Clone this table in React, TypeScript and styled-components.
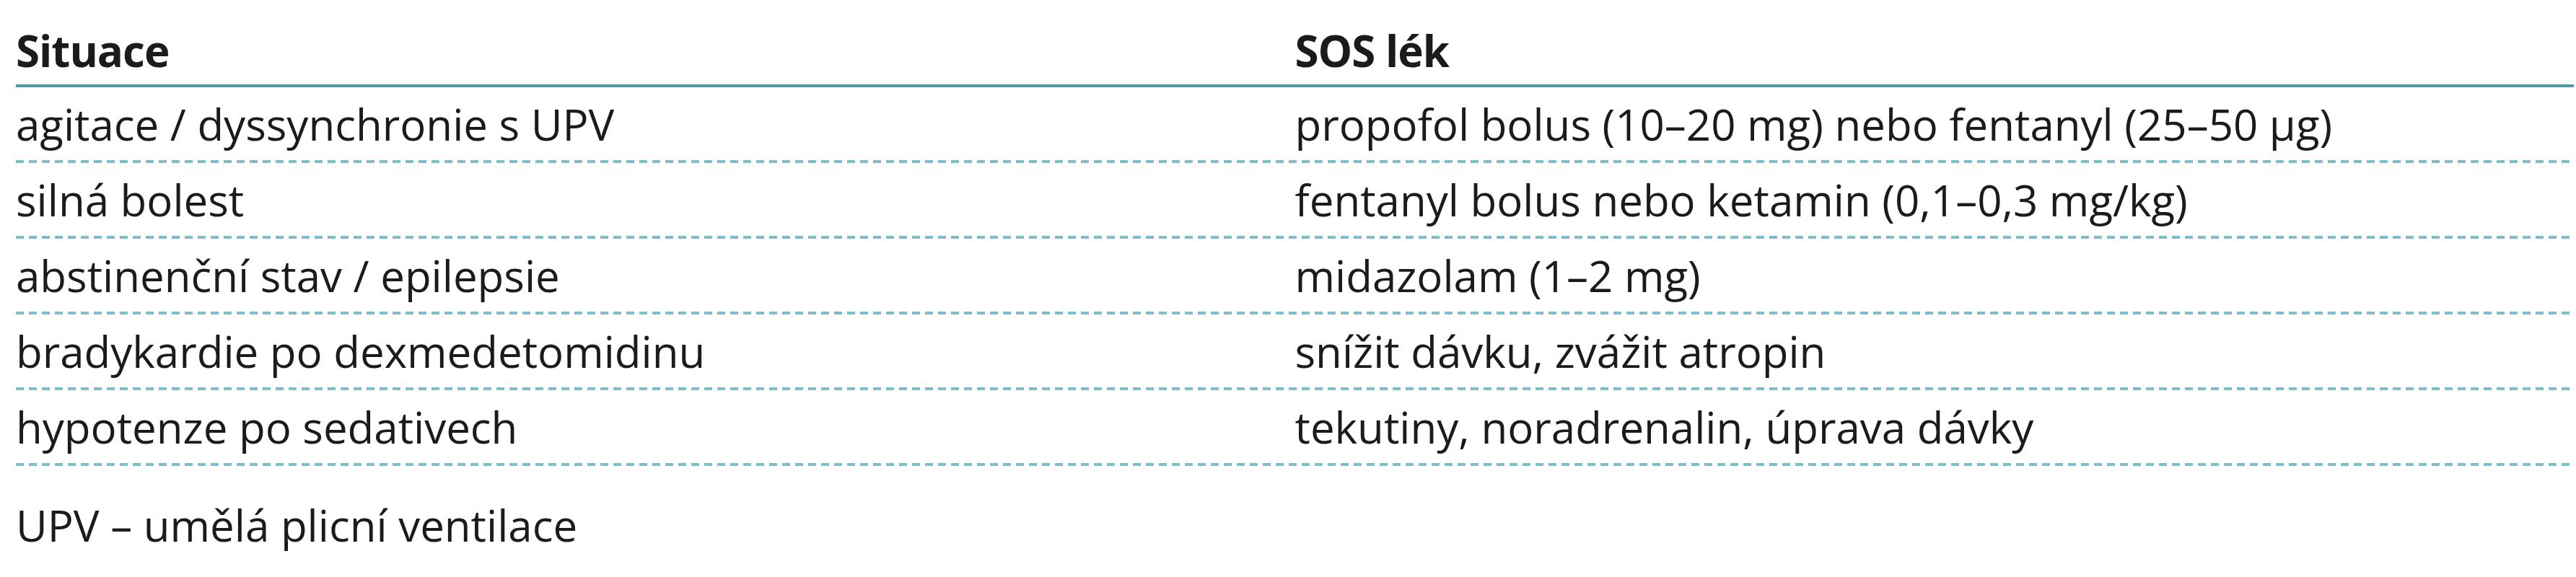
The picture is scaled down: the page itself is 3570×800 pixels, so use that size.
import React from "react";
import styled, { createGlobalStyle } from "styled-components";

const GlobalStyle = createGlobalStyle`
  html, body {
    margin: 0;
    padding: 0;
    background: #ffffff;
  }
  body {
    font-family: "Open Sans", "Noto Sans", sans-serif;
    color: #1e1a1b;
  }
`;

const Wrapper = styled.div`
  margin: 0 3px 0 22px;
  padding-top: 20px;
`;

const Table = styled.div`
  display: flex;
  flex-direction: column;
`;

const HeaderRow = styled.div`
  display: grid;
  grid-template-columns: 1fr 1fr;
  padding: 14px 0 11px;
  border-bottom: 4px solid #4a9aab;
`;

const Row = styled.div`
  display: grid;
  grid-template-columns: 1fr 1fr;
  padding: 15px 0 18px;
  background-image: repeating-linear-gradient(
    to right,
    #7cbdd0 0 11px,
    transparent 11px 18px
  );
  background-size: 100% 4px;
  background-position: left bottom;
  background-repeat: no-repeat;
`;

const Cell = styled.div<{ $head?: boolean }>`
  font-size: 60px;
  line-height: 72px;
  font-weight: ${(p) => (p.$head ? 700 : 500)};
  letter-spacing: ${(p) => (p.$head ? "-1px" : "0")};
  white-space: nowrap;
`;

const Footnote = styled.div`
  margin-top: 46px;
  font-size: 60px;
  line-height: 72px;
  font-weight: 500;
`;

const rows: [string, string][] = [
  ["agitace / dyssynchronie s UPV", "propofol bolus (10–20 mg) nebo fentanyl (25–50 µg)"],
  ["silná bolest", "fentanyl bolus nebo ketamin (0,1–0,3 mg/kg)"],
  ["abstinenční stav / epilepsie", "midazolam (1–2 mg)"],
  ["bradykardie po dexmedetomidinu", "snížit dávku, zvážit atropin"],
  ["hypotenze po sedativech", "tekutiny, noradrenalin, úprava dávky"],
];

const App: React.FC = () => {
  return (
    <>
      <GlobalStyle />
      <Wrapper>
        <Table>
          <HeaderRow>
            <Cell $head>Situace</Cell>
            <Cell $head>SOS lék</Cell>
          </HeaderRow>
          {rows.map(([situation, drug]) => (
            <Row key={situation}>
              <Cell>{situation}</Cell>
              <Cell>{drug}</Cell>
            </Row>
          ))}
        </Table>
        <Footnote>UPV – umělá plicní ventilace</Footnote>
      </Wrapper>
    </>
  );
};

export default App;
